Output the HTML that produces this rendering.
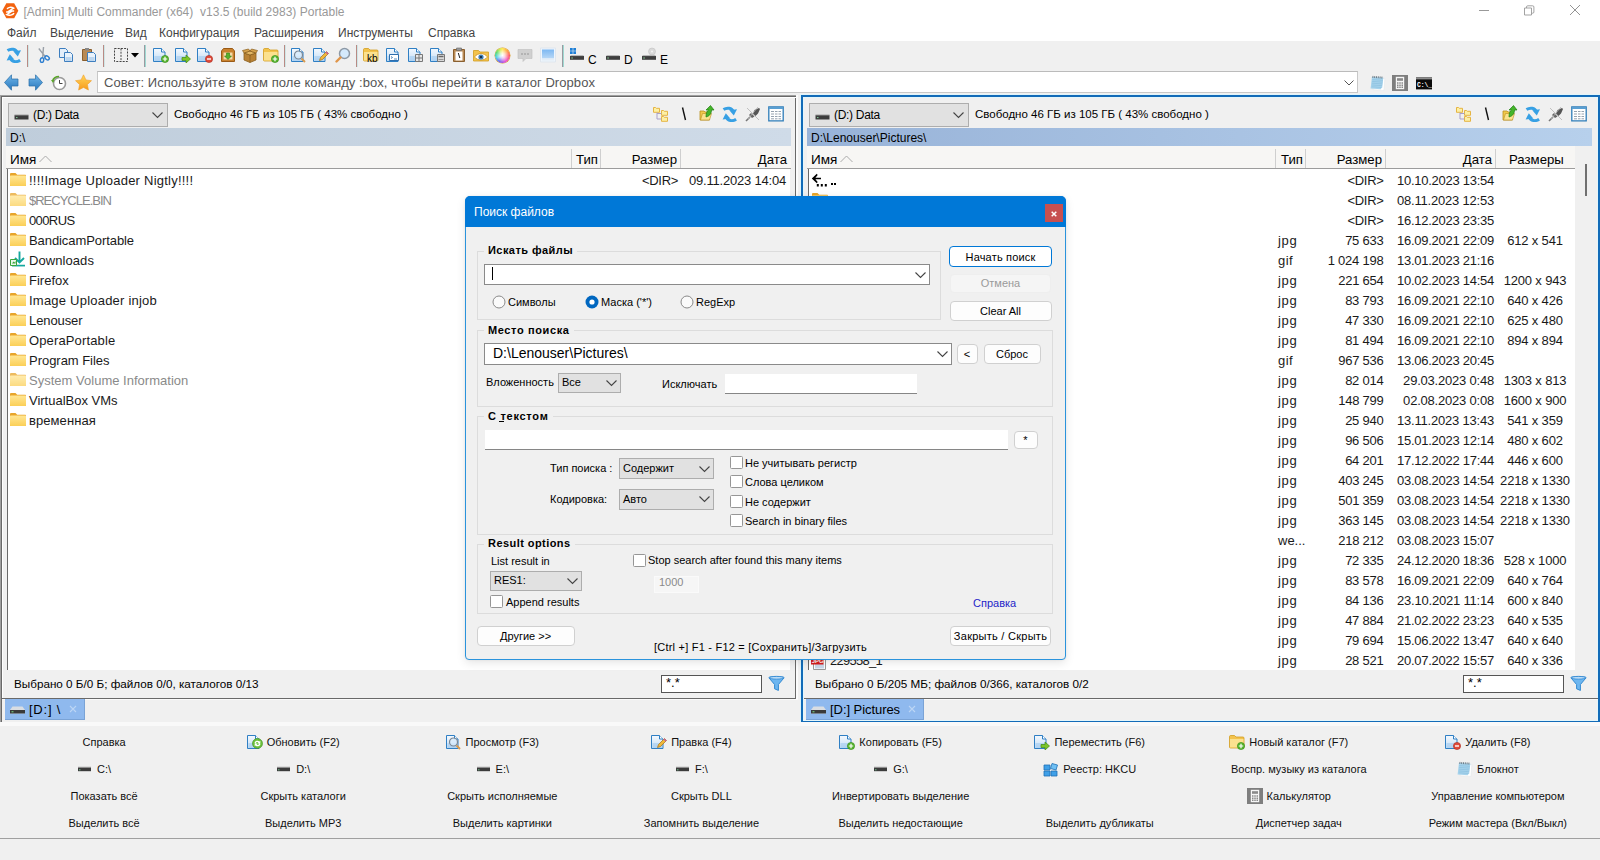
<!DOCTYPE html>
<html lang="ru"><head><meta charset="utf-8"><title>Multi Commander</title>
<style>
html,body{margin:0;padding:0}
body{width:1600px;height:860px;overflow:hidden;background:#f0f0f0;position:relative;font-family:"Liberation Sans",sans-serif;font-size:12px;color:#000}
div,span.t,svg{position:absolute;box-sizing:border-box}
span.t{white-space:pre;display:block}
.seg{font-size:12px}
.lst{font-size:13px}
.dlg{font-size:11px}
.bb{font-size:11px}
.b{font-weight:bold}
.bbc{text-align:center;font-size:11px;line-height:18px;white-space:pre;color:#111}
</style></head>
<body>
<svg width="0" height="0" style="left:0;top:0"><defs><linearGradient id="fg" x1="0" y1="0" x2="0" y2="1"><stop offset="0" stop-color="#ffe694"/><stop offset="1" stop-color="#fbcf57"/></linearGradient><linearGradient id="dg" x1="0" y1="0" x2="0" y2="1"><stop offset="0" stop-color="#f4f9fe"/><stop offset="1" stop-color="#c3ddf5"/></linearGradient><linearGradient id="mg" x1="0" y1="0" x2="0" y2="1"><stop offset="0" stop-color="#7db8f2"/><stop offset="1" stop-color="#b8d8f6"/></linearGradient><linearGradient id="ag" x1="0" y1="0" x2="0" y2="1"><stop offset="0" stop-color="#6fb6ea"/><stop offset="1" stop-color="#2a78bd"/></linearGradient><linearGradient id="sg" x1="0" y1="0" x2="0" y2="1"><stop offset="0" stop-color="#ffd75a"/><stop offset="1" stop-color="#f79a1c"/></linearGradient></defs></svg>
<div style="left:0px;top:0px;width:1600px;height:41px;background:#fff"></div>
<svg style="left:2px;top:3px" width="16.500" height="15.500" viewBox="0 0 16 16" preserveAspectRatio="none"><path d="M4.200 .3h7.600l4 7.700-4 7.700H4.200L.2 8z" fill="#f2620f"/><path d="M5 6.300C5.500 4.300 9 3.800 11.300 5.300L6.800 8.300h5M4 9.300h4.500L4.500 12c2.500 1.200 6 .5 7.200-1.500" fill="none" stroke="#fff" stroke-width="1.400"/></svg>
<span id="f0" class="t seg" style="left:23.5px;top:4.0px;height:16px;line-height:16px;color:#999;letter-spacing:0.015px;">[Admin] Multi Commander (x64)  v13.5 (build 2983) Portable</span>
<svg style="left:1470px;top:0" width="130" height="22" viewBox="0 0 130 22"><path d="M9 10.500h10" stroke="#999" stroke-width="1"/><path d="M54.500 8h7v7h-7zM56.500 8v-1c0-.8.400-1.200 1.200-1.200h5c.8 0 1.200.4 1.200 1.200v5c0 .8-.4 1.200-1.200 1.200h-1" fill="none" stroke="#999" stroke-width=".9"/><path d="M100 5l10 10M110 5l-10 10" stroke="#888" stroke-width=".9"/></svg>
<span class="t seg" style="left:7px;top:25.0px;height:16px;line-height:16px;color:#444;">Файл</span>
<span class="t seg" style="left:50px;top:25.0px;height:16px;line-height:16px;color:#444;">Выделение</span>
<span class="t seg" style="left:125px;top:25.0px;height:16px;line-height:16px;color:#444;">Вид</span>
<span class="t seg" style="left:159px;top:25.0px;height:16px;line-height:16px;color:#444;">Конфигурация</span>
<span class="t seg" style="left:254px;top:25.0px;height:16px;line-height:16px;color:#444;">Расширения</span>
<span class="t seg" style="left:338px;top:25.0px;height:16px;line-height:16px;color:#444;">Инструменты</span>
<span class="t seg" style="left:428px;top:25.0px;height:16px;line-height:16px;color:#444;">Справка</span>
<svg style="left:6px;top:47px" width="16" height="16" viewBox="0 0 16 16"><path d="M1.500 3.600C5 1.200 10 1.800 11.200 5.500" fill="none" stroke="#37a0e4" stroke-width="3"/><path d="M7.300 4.300L15 3.200 11.800 9.600z" fill="#37a0e4"/><g transform="rotate(180 7.800 8.400)"><path d="M1.500 3.600C5 1.200 10 1.800 11.200 5.500" fill="none" stroke="#37a0e4" stroke-width="3"/><path d="M7.300 4.300L15 3.200 11.800 9.600z" fill="#37a0e4"/></g></svg>
<svg style="left:35px;top:47px" width="16" height="16" viewBox="0 0 16 16"><g transform="rotate(-18 8 8)"><path d="M6 .5l3.500 9.500M11 .5L7 10" stroke="#9aa0a8" stroke-width="1.400" fill="none"/><ellipse cx="5.500" cy="12.500" rx="1.700" ry="2.400" transform="rotate(25 5.500 12.500)" fill="none" stroke="#2f7fd0" stroke-width="1.500"/><ellipse cx="11" cy="12" rx="1.700" ry="2.400" transform="rotate(-35 11 12)" fill="none" stroke="#2f7fd0" stroke-width="1.500"/></g></svg>
<svg style="left:58px;top:47px" width="16" height="16" viewBox="0 0 16 16"><path d="M1.500 1.500h6l2 2v7h-8z" fill="#e3eefa" stroke="#3d7ebf"/><path d="M6.500 5.500h6l2 2v7h-8z" fill="#e9f2fb" stroke="#3d7ebf"/><path d="M7.500 10h6v4h-6z" fill="#bcd6ef"/></svg>
<svg style="left:81px;top:47px" width="16" height="16" viewBox="0 0 16 16"><path d="M1.500 2.500h9v11h-9z" fill="#b98a54" stroke="#8a5f2e"/><path d="M4 1h4v2.500h-4z" fill="#888"/><path d="M6.500 5.500h6l2 2v7h-8z" fill="#e9f2fb" stroke="#3d7ebf"/><path d="M7.500 10h6v4h-6z" fill="#bcd6ef"/></svg>
<svg style="left:113px;top:47px" width="16" height="16" viewBox="0 0 16 16"><path d="M1.500 1.500h13v13h-13zM8 1.500v13" fill="none" stroke="#444" stroke-dasharray="2 1.200"/></svg>
<svg style="left:152.5px;top:47px" width="16" height="16" viewBox="0 0 16 16"><path d="M.5 1.500h8l3.500 3.500v9.500h-11.500z" fill="url(#dg)" stroke="#2f7fc4"/><path d="M1.500 9h9.500v5h-9.500z" fill="#9fc8ee" fill-opacity=".55"/><path d="M8.500 1.500v3.500h3.500" fill="#fff" stroke="#2f7fc4"/><circle cx="12" cy="12" r="3.600" fill="#58b530" stroke="#2f8a12" stroke-width=".6"/><path d="M9.800 12h4.400M12 9.800v4.400" stroke="#fff" stroke-width="1.200"/></svg>
<svg style="left:174.5px;top:47px" width="16" height="16" viewBox="0 0 16 16"><path d="M.5 1.500h8l3.500 3.500v9.500h-11.500z" fill="url(#dg)" stroke="#2f7fc4"/><path d="M1.500 9h9.500v5h-9.500z" fill="#9fc8ee" fill-opacity=".55"/><path d="M8.500 1.500v3.500h3.500" fill="#fff" stroke="#2f7fc4"/><path d="M7 10.500h4V8l4.500 4-4.500 4v-2.500H7z" fill="#7cc527" stroke="#3f8a12" stroke-width=".7"/></svg>
<svg style="left:196.5px;top:47px" width="16" height="16" viewBox="0 0 16 16"><path d="M.5 1.500h8l3.500 3.500v9.500h-11.500z" fill="url(#dg)" stroke="#2f7fc4"/><path d="M1.500 9h9.500v5h-9.500z" fill="#9fc8ee" fill-opacity=".55"/><path d="M8.500 1.500v3.500h3.500" fill="#fff" stroke="#2f7fc4"/><circle cx="12" cy="12" r="3.600" fill="#e04a3a" stroke="#a82a1c" stroke-width=".6"/><path d="M10 12h4" stroke="#fff" stroke-width="1.400"/></svg>
<svg style="left:219.5px;top:47px" width="16" height="16" viewBox="0 0 16 16"><path d="M1.500 4l2-2.500h9l2 2.500v10.500h-13z" fill="#c9822e" stroke="#9a5a16"/><path d="M3.500 5.500h9v7h-9z" fill="#f3d9a8"/><path d="M6.500 6h3v3h2L8 12.500 4.500 9h2z" fill="#57b02b" stroke="#2f7f12" stroke-width=".6"/></svg>
<svg style="left:241.5px;top:47px" width="16" height="16" viewBox="0 0 16 16"><path d="M2 6l6 2 6-2v7l-6 2.500-6-2.500z" fill="#b98235" stroke="#8a5f1e" stroke-width=".8"/><path d="M2 6l6-2 6 2-6 2z" fill="#e2b665" stroke="#8a5f1e" stroke-width=".8"/><path d="M2 6L.5 3.500l6-1.500L8 4zM14 6l1.500-2.500-6-1.500L8 4z" fill="#d6a24c" stroke="#8a5f1e" stroke-width=".7"/><path d="M8 8v7.500" stroke="#8a5f1e" stroke-width=".8"/></svg>
<svg style="left:263px;top:47px" width="16" height="16" viewBox="0 0 16 16"><path d="M.5 2.500C.5 2 1 1.500 1.500 1.500h4l1.500 1.500H14c.6 0 1 .4 1 1v9c0 .6-.4 1-1 1H1.500c-.6 0-1-.4-1-1z" fill="#f3c34d" stroke="#d29d21" stroke-width=".8"/><path d="M1 5h13.500v8.500h-13.500z" fill="#fbe18f"/><circle cx="12" cy="12" r="3.600" fill="#58b530" stroke="#2f8a12" stroke-width=".6"/><path d="M9.800 12h4.400M12 9.800v4.400" stroke="#fff" stroke-width="1.200"/></svg>
<svg style="left:291px;top:47px" width="16" height="16" viewBox="0 0 16 16"><path d="M.5 1.500h8l3.500 3.500v9.500h-11.500z" fill="url(#dg)" stroke="#2f7fc4"/><path d="M1.500 9h9.500v5h-9.500z" fill="#9fc8ee" fill-opacity=".55"/><path d="M8.500 1.500v3.500h3.500" fill="#fff" stroke="#2f7fc4"/><circle cx="7.500" cy="8" r="4" fill="#d8ebfb" fill-opacity=".8" stroke="#7b8794" stroke-width="1.200"/><path d="M10.500 11.500l3.500 3.500" stroke="#d99a4e" stroke-width="2"/></svg>
<svg style="left:312.5px;top:47px" width="16" height="16" viewBox="0 0 16 16"><path d="M.5 1.500h8l3.500 3.500v9.500h-11.500z" fill="url(#dg)" stroke="#2f7fc4"/><path d="M1.500 9h9.500v5h-9.500z" fill="#9fc8ee" fill-opacity=".55"/><path d="M8.500 1.500v3.500h3.500" fill="#fff" stroke="#2f7fc4"/><path d="M6.500 13.500l1-3 6-6 2 2-6 6z" fill="#f0b83a" stroke="#a2701a" stroke-width=".7"/><path d="M13 5l2 2" stroke="#c75aa0" stroke-width="1.500"/></svg>
<svg style="left:335px;top:47px" width="16" height="16" viewBox="0 0 16 16"><circle cx="9.500" cy="6.500" r="5" fill="#d4e9fb" stroke="#8d99a6" stroke-width="1.500"/><path d="M5.500 10.500L1.500 14.500" stroke="#e0964a" stroke-width="2.400" stroke-linecap="round"/></svg>
<svg style="left:363px;top:47px" width="16" height="16" viewBox="0 0 16 16"><path d="M.5 2.500C.5 2 1 1.500 1.500 1.500h4l1.500 1.500H14c.6 0 1 .4 1 1v9c0 .6-.4 1-1 1H1.500c-.6 0-1-.4-1-1z" fill="#f3c34d" stroke="#d29d21" stroke-width=".8"/><path d="M1 5h13.500v8.500h-13.500z" fill="#fbe18f"/><text x="4" y="15" font-family="Liberation Sans" font-size="10" fill="#000">kb</text></svg>
<svg style="left:385.5px;top:47px" width="16" height="16" viewBox="0 0 16 16"><path d="M.5 1.500h8l3.500 3.500v9.500h-11.500z" fill="url(#dg)" stroke="#2f7fc4"/><path d="M1.500 9h9.500v5h-9.500z" fill="#9fc8ee" fill-opacity=".55"/><path d="M8.500 1.500v3.500h3.500" fill="#fff" stroke="#2f7fc4"/><path d="M3.500 7.500h9v6h-9z" fill="#fff" stroke="#2f6fae"/><path d="M5 9.500l1.500 1-1.500 1M8 12h3" stroke="#2f6fae" stroke-width=".8" fill="none"/></svg>
<svg style="left:407.5px;top:47px" width="16" height="16" viewBox="0 0 16 16"><path d="M.5 1.500h8l3.500 3.500v9.500h-11.500z" fill="url(#dg)" stroke="#2f7fc4"/><path d="M1.500 9h9.500v5h-9.500z" fill="#9fc8ee" fill-opacity=".55"/><path d="M8.500 1.500v3.500h3.500" fill="#fff" stroke="#2f7fc4"/><path d="M7.500 7.500h7v7h-7z" fill="#e8e8e8" stroke="#777"/><path d="M11 7.500v7M7.500 11h7" stroke="#777"/></svg>
<svg style="left:429.5px;top:47px" width="16" height="16" viewBox="0 0 16 16"><path d="M.5 1.500h8l3.500 3.500v9.500h-11.500z" fill="url(#dg)" stroke="#2f7fc4"/><path d="M1.500 9h9.500v5h-9.500z" fill="#9fc8ee" fill-opacity=".55"/><path d="M8.500 1.500v3.500h3.500" fill="#fff" stroke="#2f7fc4"/><path d="M7.500 7.500h7v7h-7z" fill="#d8d8d8" stroke="#777"/><path d="M8.500 9.500h5" stroke="#666" stroke-width="1.400"/><path d="M8.500 12.500h5" stroke="#999"/></svg>
<svg style="left:450.5px;top:47px" width="16" height="16" viewBox="0 0 16 16"><path d="M2.500 2.500h11v12h-11z" fill="#b98a54" stroke="#8a5f2e"/><path d="M4.500 4.500h7v9h-7z" fill="#fff"/><path d="M5.500 1h5v2.500h-5z" fill="#999" stroke="#666" stroke-width=".6"/><path d="M7.300 6l1.500 5" stroke="#222"/></svg>
<svg style="left:473px;top:47px" width="16" height="16" viewBox="0 0 16 16"><path d="M.5 3.500h5l1.500 1.500h8.500v9H.5z" fill="#f3c34d" stroke="#d29d21" stroke-width=".8"/><path d="M1.500 10c3-4.500 10-4.500 13 0-3 4-10 4-13 0z" fill="#fff" stroke="#c9962a" stroke-width=".8"/><circle cx="8" cy="10" r="2.600" fill="#3f7fb6"/><circle cx="8" cy="10" r="1.100" fill="#123"/></svg>
<div style="left:494.7px;top:47.5px;width:15.5px;height:15.5px;border-radius:50%;background:radial-gradient(circle,#fff 0,rgba(255,255,255,.75) 25%,rgba(255,255,255,0) 70%),conic-gradient(from 0deg,#ffe640,#ff9a2a 12%,#ff4a55 25%,#e83ad0 42%,#5a55f0 58%,#35c8e8 70%,#45d85a 83%,#c8e83a 93%,#ffe640);box-shadow:0 0 0 .5px #d9a030"></div>
<svg style="left:517px;top:47px" width="16" height="16" viewBox="0 0 16 16"><path d="M1 2.500h14v9H9L6 14.500v-3H1z" fill="#d0d0d0" stroke="#bdbdbd" stroke-width=".6"/><circle cx="5" cy="7" r="1" fill="#aaa"/><circle cx="8" cy="7" r="1" fill="#aaa"/><circle cx="11" cy="7" r="1" fill="#aaa"/></svg>
<svg style="left:539.7px;top:47px" width="16" height="16" viewBox="0 0 16 16"><path d="M.5 1h15v14H.5z" fill="#eef5fc" stroke="#dfe6ee"/><path d="M2 2.500h12v9H2z" fill="url(#mg)"/><path d="M2 11.500h12v2H2z" fill="#e3edf7"/></svg>
<svg style="left:569px;top:47px" width="16" height="16" viewBox="0 0 16 16"><path d="M1 9h14v3.800H1z" fill="#3e3e3e"/><path d="M1.500 8.700h13" stroke="#8c8c8c" stroke-width=".7"/><path d="M2.200 11h1.800" stroke="#8fe0a0" stroke-width=".8"/><path d="M1 1h2.700v2.700H1zM4.300 1H7v2.700H4.300zM1 4.300h2.700V7H1zM4.300 4.300H7V7H4.300z" fill="#1e7fd6"/></svg>
<svg style="left:605px;top:47px" width="16" height="16" viewBox="0 0 16 16"><path d="M1 9h14v3.800H1z" fill="#3e3e3e"/><path d="M1.500 8.700h13" stroke="#8c8c8c" stroke-width=".7"/><path d="M2.200 11h1.800" stroke="#8fe0a0" stroke-width=".8"/></svg>
<svg style="left:641px;top:47px" width="16" height="16" viewBox="0 0 16 16"><path d="M1 9h14v3.800H1z" fill="#3e3e3e"/><path d="M1.500 8.700h13" stroke="#8c8c8c" stroke-width=".7"/><path d="M2.200 11h1.800" stroke="#8fe0a0" stroke-width=".8"/><circle cx="11" cy="4.500" r="3.500" fill="#d9d9d9" stroke="#bbb" stroke-width=".5"/><circle cx="11" cy="4.500" r="1" fill="#f4f4f4"/></svg>
<svg style="left:131px;top:53px" width="8" height="5" viewBox="0 0 8 5"><path d="M0 0h8L4 4.500z" fill="#000"/></svg>
<div style="left:27px;top:45px;width:1px;height:22px;background:#b88a84"></div>
<div style="left:28px;top:45px;width:1px;height:22px;background:#cfe6e6"></div>
<div style="left:103px;top:45px;width:1px;height:22px;background:#b88a84"></div>
<div style="left:104px;top:45px;width:1px;height:22px;background:#cfe6e6"></div>
<div style="left:284px;top:45px;width:1px;height:22px;background:#b88a84"></div>
<div style="left:285px;top:45px;width:1px;height:22px;background:#cfe6e6"></div>
<div style="left:356px;top:45px;width:1px;height:22px;background:#b88a84"></div>
<div style="left:357px;top:45px;width:1px;height:22px;background:#cfe6e6"></div>
<div style="left:143.5px;top:45px;width:1px;height:22px;background:#9a9aa0"></div>
<div style="left:144.5px;top:45px;width:1px;height:22px;background:#9fd9d2"></div>
<div style="left:561.5px;top:45px;width:1px;height:22px;background:#9a9aa0"></div>
<div style="left:562.5px;top:45px;width:1px;height:22px;background:#9fd9d2"></div>
<span class="t seg" style="left:588px;top:51.5px;height:16px;line-height:16px;">C</span>
<span class="t seg" style="left:624px;top:51.5px;height:16px;line-height:16px;">D</span>
<span class="t seg" style="left:660px;top:51.5px;height:16px;line-height:16px;">E</span>
<svg style="left:4px;top:73.8px" width="16" height="17" viewBox="0 0 16 17"><path d="M.5 8.500L7.500 .8V5H14v7H7.500v4.200z" fill="url(#ag)" stroke="#2a6ea8" stroke-width=".7"/></svg>
<svg style="left:27.5px;top:73.8px" width="16" height="17" viewBox="0 0 16 17"><path d="M14.500 8.500L7.500 .8V5H1v7h6.500v4.200z" fill="url(#ag)" stroke="#2a6ea8" stroke-width=".7"/></svg>
<svg style="left:51px;top:75px" width="16" height="16" viewBox="0 0 16 16"><circle cx="8.500" cy="8.500" r="6" fill="#fff" stroke="#9a9a9a" stroke-width="1.600"/><path d="M8.500 5v3.500h3" stroke="#444" stroke-width="1" fill="none"/><path d="M1.500 6C2.500 3 5 1.500 8 1.500" stroke="#5aa52a" stroke-width="1.600" fill="none"/><path d="M0 5l3.500.3L2 8z" fill="#5aa52a"/></svg>
<svg style="left:74.5px;top:74px" width="17" height="17" viewBox="0 0 16 16"><path d="M8 .8l2.300 4.800 5.200.7-3.800 3.600.9 5.200L8 12.600 3.400 15.100l.9-5.200L.5 6.300l5.200-.7z" fill="url(#sg)" stroke="#f2a02a" stroke-width=".6"/></svg>
<div style="left:96.5px;top:71.3px;width:1261.5px;height:21.5px;background:#fff;border:1px solid #c8c8c8;border-top-color:#bbb"></div>
<span id="f1" class="t lst" style="left:104px;top:75.3px;height:16px;line-height:16px;color:#555;letter-spacing:0.059px;">Совет: Используйте в этом поле команду :box, чтобы перейти в каталог Dropbox</span>
<svg style="left:1343.500px;top:80px" width="10" height="6" viewBox="0 0 10 6"><path d="M.5.500L5 5 9.500.5" fill="none" stroke="#555" stroke-width="1"/></svg>
<svg style="left:1369.5px;top:74.5px" width="16" height="16" viewBox="0 0 16 16"><g transform="rotate(4 8 8)"><path d="M3.500 3h11v12h-11z" fill="#fff" stroke="#e3e6ea" stroke-width=".6"/><path d="M1.500 2.500h11.500l-.5 9.500-1.500 2H1z" fill="#a6d3ec"/><path d="M2 5h10.500M2 6.800h10.500M2 8.600h10.500M2 10.400h10.300M2 12.200h9.500" stroke="#86bcdd" stroke-width=".6"/><path d="M2.500 1.300v2M4.300 1.300v2M6.100 1.300v2M7.900 1.300v2M9.700 1.300v2M11.500 1.300v2" stroke="#5a6874" stroke-width=".8"/></g></svg>
<svg style="left:1392px;top:75px" width="16" height="16" viewBox="0 0 16 16"><path d="M0 0h16v16H0z" fill="#7e7e7e"/><path d="M3.800 1.800h8.400v12.400H3.800z" fill="#f6f6f6"/><path d="M5 3.200h6v2.600H5z" fill="#8a8a8a"/><path d="M5 7.200h1.500v1.500H5zM7.250 7.200h1.500v1.500h-1.500zM9.500 7.200H11v1.500H9.500zM5 9.400h1.500v1.500H5zM7.250 9.400h1.500v1.500h-1.500zM9.500 9.400H11v1.500H9.500zM5 11.600h1.500v1.500H5zM7.250 11.600h1.500v1.500h-1.500zM9.500 11.600H11v1.500H9.500z" fill="#8a8a8a"/></svg>
<svg style="left:1415.5px;top:75px" width="16" height="16" viewBox="0 0 16 16"><path d="M0 2.400h16v12H0z" fill="#0a0a0a"/><path d="M0 2.400h16v2H0z" fill="#8c8c8c"/><text x="1" y="12.200" font-family="Liberation Mono" font-size="6.300" font-weight="bold" fill="#fff">C:\_</text></svg>
<div style="left:0px;top:95px;width:797px;height:1px;background:#a0a0a0"></div>
<div style="left:0px;top:95px;width:1px;height:627px;background:#a0a0a0"></div>
<div style="left:1px;top:96px;width:795px;height:1px;background:#696969"></div>
<div style="left:1px;top:96px;width:1px;height:626px;background:#696969"></div>
<div style="left:795px;top:96px;width:1px;height:603px;background:#696969"></div>
<div style="left:796px;top:95px;width:2px;height:605px;background:#fbfbfb"></div>
<div style="left:2px;top:97px;width:794px;height:1px;background:#fff"></div>
<div style="left:2px;top:97px;width:1px;height:601px;background:#fff"></div>
<div style="left:8px;top:103px;width:160px;height:24px;background:#e1e1e1;border:1px solid #adadad"></div>
<svg style="left:14px;top:113px" width="15" height="7" viewBox="0 0 15 7"><path d="M.5 2.200h14v4.300H.5z" fill="#3c3c3c"/><path d="M.5 1.900h14" stroke="#8a8a8a" stroke-width=".6"/><path d="M2 4.600h1.500" stroke="#8fe0a8" stroke-width=".9"/></svg>
<span id="f2" class="t seg" style="left:33px;top:107.0px;height:16px;line-height:16px;letter-spacing:-0.299px;">(D:) Data</span>
<svg style="left:152px;top:112px" width="11" height="7" viewBox="0 0 11 7"><path d="M.5.500L5.500 5.500 10.500.5" fill="none" stroke="#444" stroke-width="1.100"/></svg>
<span class="t seg" style="left:174px;top:106.0px;height:16px;line-height:16px;font-size:11.500px;">Свободно 46 ГБ из 105 ГБ ( 43% свободно )</span>
<svg style="left:653px;top:106px" width="16" height="16" viewBox="0 0 16 16"><path d="M.5 1.500h2l.8.800h3.200v4h-6z" fill="#fdf0a4" stroke="#e5b443" stroke-width="1"/><path d="M8.500 4.500h2l.8.800h3.200v4h-6zM8.500 10.500h2l.8.800h3.200v4h-6z" fill="#fdf0a4" stroke="#e5b443" stroke-width="1"/><path d="M4 6.500v6.500h4.500M4 7.500h4.500" fill="none" stroke="#a9a1c9" stroke-width="1"/></svg>
<svg style="left:680px;top:106px" width="8" height="16" viewBox="0 0 8 16"><path d="M2.500 1.500L5.500 14" stroke="#111" stroke-width="1.400"/></svg>
<svg style="left:699px;top:105px" width="16" height="16" viewBox="0 0 16 16"><path d="M1 6h4l1 1h4.500v8H1z" fill="#f1c84c" stroke="#b98f1e" stroke-width=".8"/><path d="M1.500 15l2-6.500h9L10.500 15z" fill="#fbe38f" stroke="#b98f1e" stroke-width=".6"/><path d="M7 12c0-4 1-6 2.500-7H7l4.500-4.500L15 5h-2.500c0 3-1.500 6-5.500 7z" fill="#45b52a" stroke="#1f7f12" stroke-width=".7"/></svg>
<svg style="left:722px;top:105.5px" width="16" height="16" viewBox="0 0 16 16"><path d="M1.500 3.600C5 1.200 10 1.800 11.200 5.500" fill="none" stroke="#37a0e4" stroke-width="3"/><path d="M7.300 4.300L15 3.200 11.800 9.600z" fill="#37a0e4"/><g transform="rotate(180 7.800 8.400)"><path d="M1.500 3.600C5 1.200 10 1.800 11.200 5.500" fill="none" stroke="#37a0e4" stroke-width="3"/><path d="M7.300 4.300L15 3.200 11.800 9.600z" fill="#37a0e4"/></g></svg>
<svg style="left:745px;top:106px" width="16" height="16" viewBox="0 0 16 16"><path d="M1 15L5 11" stroke="#777" stroke-width="1.600"/><path d="M4 9l3 3 2.500-1.500L6 7z" fill="#666"/><path d="M8 7.500l2.500 2.500L13 7.500 15 3l-1-1-4.500 2z" fill="#555"/><path d="M2 2l12 12M13 1L3 13" stroke="#b4b4b4" stroke-width=".8"/></svg>
<svg style="left:768px;top:105.5px" width="16" height="16" viewBox="0 0 16 16"><path d="M.8 .8h14.400v14H.8z" fill="#fff" stroke="#2e7cb8" stroke-width="1.300"/><path d="M1 1h14v2H1z" fill="#5a9fd2"/><path d="M3 5.500h3M3 8h3M3 10.500h3M3 12.800h3M7 5.500h2.500M7 8h2.500M7 10.500h2.500M7 12.800h2.500M10.500 5.500H13M10.500 8H13M10.500 10.500H13M10.500 12.800H13" stroke="#8a97a6" stroke-width=".9"/></svg>
<div style="left:6px;top:128px;width:785px;height:18.4px;background:linear-gradient(90deg,#bfcddb,#cfdbe8)"></div>
<span class="t seg" style="left:10px;top:130.0px;height:16px;line-height:16px;">D:\</span>
<div style="left:6px;top:146px;width:785px;height:23px;background:#f7f6f4;border-bottom:1px solid #9c9c9c"></div>
<span class="t lst" style="left:10px;top:152.0px;height:16px;line-height:16px;font-size:13.500px;">Имя</span>
<svg style="left:39px;top:155px" width="13" height="8" viewBox="0 0 13 8"><path d="M.5 7L6.500 1 12.500 7" fill="none" stroke="#aaa" stroke-width="1"/></svg>
<div style="left:571px;top:149px;width:1px;height:19px;background:#cfcfcf"></div>
<div style="left:600px;top:149px;width:1px;height:19px;background:#cfcfcf"></div>
<div style="left:680px;top:149px;width:1px;height:19px;background:#cfcfcf"></div>
<span class="t lst" style="left:576px;top:152.0px;height:16px;line-height:16px;font-size:13.200px;">Тип</span>
<span class="t lst" style="right:923px;top:152.0px;height:16px;line-height:16px;font-size:13.200px;">Размер</span>
<span class="t lst" style="right:813px;top:152.0px;height:16px;line-height:16px;font-size:13.200px;">Дата</span>
<div style="left:7px;top:169px;width:783px;height:501px;background:#fff;border-left:1px solid #696969"></div>
<svg style="left:10px;top:172px" width="16" height="16" viewBox="0 0 16 16"><path d="M0 2.200C0 1.500.5 1 1.200 1h4.300l1.700 1.700H15c.6 0 1 .4 1 1V13c0 .6-.4 1-1 1H1c-.6 0-1-.4-1-1z" fill="#e8a52a"/><path d="M0 4.600c0-.6.400-1 1-1H15c.6 0 1 .4 1 1V13c0 .6-.4 1-1 1H1c-.6 0-1-.4-1-1z" fill="url(#fg)"/></svg>
<span id="f3" class="t lst" style="left:29px;top:173.0px;height:16px;line-height:16px;color:#1a1a1a;letter-spacing:0.234px;">!!!!Image Uploader Nigtly!!!!</span>
<span id="f4" class="t lst" style="right:922px;top:173.0px;height:16px;line-height:16px;color:#1a1a1a;letter-spacing:-0.316px;">&lt;DIR&gt;</span>
<svg style="left:10px;top:192px" width="16" height="16" viewBox="0 0 16 16" opacity=".75"><path d="M0 2.200C0 1.500.5 1 1.200 1h4.300l1.700 1.700H15c.6 0 1 .4 1 1V13c0 .6-.4 1-1 1H1c-.6 0-1-.4-1-1z" fill="#e8a52a"/><path d="M0 4.600c0-.6.400-1 1-1H15c.6 0 1 .4 1 1V13c0 .6-.4 1-1 1H1c-.6 0-1-.4-1-1z" fill="url(#fg)"/></svg>
<span id="f5" class="t lst" style="left:29px;top:193.0px;height:16px;line-height:16px;color:#8a8a8a;letter-spacing:-1.000px;">$RECYCLE.BIN</span>
<span id="f6" class="t lst" style="right:922px;top:193.0px;height:16px;line-height:16px;color:#1a1a1a;letter-spacing:-0.316px;">&lt;DIR&gt;</span>
<svg style="left:10px;top:212px" width="16" height="16" viewBox="0 0 16 16"><path d="M0 2.200C0 1.500.5 1 1.200 1h4.300l1.700 1.700H15c.6 0 1 .4 1 1V13c0 .6-.4 1-1 1H1c-.6 0-1-.4-1-1z" fill="#e8a52a"/><path d="M0 4.600c0-.6.400-1 1-1H15c.6 0 1 .4 1 1V13c0 .6-.4 1-1 1H1c-.6 0-1-.4-1-1z" fill="url(#fg)"/></svg>
<span id="f7" class="t lst" style="left:29px;top:213.0px;height:16px;line-height:16px;color:#1a1a1a;letter-spacing:-0.607px;">000RUS</span>
<span id="f8" class="t lst" style="right:922px;top:213.0px;height:16px;line-height:16px;color:#1a1a1a;letter-spacing:-0.316px;">&lt;DIR&gt;</span>
<svg style="left:10px;top:232px" width="16" height="16" viewBox="0 0 16 16"><path d="M0 2.200C0 1.500.5 1 1.200 1h4.300l1.700 1.700H15c.6 0 1 .4 1 1V13c0 .6-.4 1-1 1H1c-.6 0-1-.4-1-1z" fill="#e8a52a"/><path d="M0 4.600c0-.6.400-1 1-1H15c.6 0 1 .4 1 1V13c0 .6-.4 1-1 1H1c-.6 0-1-.4-1-1z" fill="url(#fg)"/></svg>
<span id="f9" class="t lst" style="left:29px;top:233.0px;height:16px;line-height:16px;color:#1a1a1a;letter-spacing:-0.077px;">BandicamPortable</span>
<span id="f10" class="t lst" style="right:922px;top:233.0px;height:16px;line-height:16px;color:#1a1a1a;letter-spacing:-0.316px;">&lt;DIR&gt;</span>
<svg style="left:10px;top:251px" width="16" height="16" viewBox="0 0 16 16"><path d="M9.500 .5v11M5 7l4.500 4.500L14 7" fill="none" stroke="#14a79e" stroke-width="1.900"/><path d="M2 14.600h13" stroke="#14a79e" stroke-width="1.700"/><path d="M.5 8.500h6v6h-6z" fill="#eaf7ea" stroke="#3aa53a"/><path d="M2 12.500l1.500-2 1 1 1-1.500v2.500z" fill="#3aa53a"/></svg>
<span id="f11" class="t lst" style="left:29px;top:253.0px;height:16px;line-height:16px;color:#1a1a1a;letter-spacing:0.075px;">Downloads</span>
<span id="f12" class="t lst" style="right:922px;top:253.0px;height:16px;line-height:16px;color:#1a1a1a;letter-spacing:-0.316px;">&lt;DIR&gt;</span>
<svg style="left:10px;top:272px" width="16" height="16" viewBox="0 0 16 16"><path d="M0 2.200C0 1.500.5 1 1.200 1h4.300l1.700 1.700H15c.6 0 1 .4 1 1V13c0 .6-.4 1-1 1H1c-.6 0-1-.4-1-1z" fill="#e8a52a"/><path d="M0 4.600c0-.6.400-1 1-1H15c.6 0 1 .4 1 1V13c0 .6-.4 1-1 1H1c-.6 0-1-.4-1-1z" fill="url(#fg)"/></svg>
<span id="f13" class="t lst" style="left:29px;top:273.0px;height:16px;line-height:16px;color:#1a1a1a;letter-spacing:0.009px;">Firefox</span>
<span id="f14" class="t lst" style="right:922px;top:273.0px;height:16px;line-height:16px;color:#1a1a1a;letter-spacing:-0.316px;">&lt;DIR&gt;</span>
<svg style="left:10px;top:292px" width="16" height="16" viewBox="0 0 16 16"><path d="M0 2.200C0 1.500.5 1 1.200 1h4.300l1.700 1.700H15c.6 0 1 .4 1 1V13c0 .6-.4 1-1 1H1c-.6 0-1-.4-1-1z" fill="#e8a52a"/><path d="M0 4.600c0-.6.400-1 1-1H15c.6 0 1 .4 1 1V13c0 .6-.4 1-1 1H1c-.6 0-1-.4-1-1z" fill="url(#fg)"/></svg>
<span id="f15" class="t lst" style="left:29px;top:293.0px;height:16px;line-height:16px;color:#1a1a1a;letter-spacing:0.221px;">Image Uploader injob</span>
<span id="f16" class="t lst" style="right:922px;top:293.0px;height:16px;line-height:16px;color:#1a1a1a;letter-spacing:-0.316px;">&lt;DIR&gt;</span>
<svg style="left:10px;top:312px" width="16" height="16" viewBox="0 0 16 16"><path d="M0 2.200C0 1.500.5 1 1.200 1h4.300l1.700 1.700H15c.6 0 1 .4 1 1V13c0 .6-.4 1-1 1H1c-.6 0-1-.4-1-1z" fill="#e8a52a"/><path d="M0 4.600c0-.6.400-1 1-1H15c.6 0 1 .4 1 1V13c0 .6-.4 1-1 1H1c-.6 0-1-.4-1-1z" fill="url(#fg)"/></svg>
<span id="f17" class="t lst" style="left:29px;top:313.0px;height:16px;line-height:16px;color:#1a1a1a;letter-spacing:-0.090px;">Lenouser</span>
<span id="f18" class="t lst" style="right:922px;top:313.0px;height:16px;line-height:16px;color:#1a1a1a;letter-spacing:-0.316px;">&lt;DIR&gt;</span>
<svg style="left:10px;top:332px" width="16" height="16" viewBox="0 0 16 16"><path d="M0 2.200C0 1.500.5 1 1.200 1h4.300l1.700 1.700H15c.6 0 1 .4 1 1V13c0 .6-.4 1-1 1H1c-.6 0-1-.4-1-1z" fill="#e8a52a"/><path d="M0 4.600c0-.6.400-1 1-1H15c.6 0 1 .4 1 1V13c0 .6-.4 1-1 1H1c-.6 0-1-.4-1-1z" fill="url(#fg)"/></svg>
<span id="f19" class="t lst" style="left:29px;top:333.0px;height:16px;line-height:16px;color:#1a1a1a;letter-spacing:0.134px;">OperaPortable</span>
<span id="f20" class="t lst" style="right:922px;top:333.0px;height:16px;line-height:16px;color:#1a1a1a;letter-spacing:-0.316px;">&lt;DIR&gt;</span>
<svg style="left:10px;top:352px" width="16" height="16" viewBox="0 0 16 16"><path d="M0 2.200C0 1.500.5 1 1.200 1h4.300l1.700 1.700H15c.6 0 1 .4 1 1V13c0 .6-.4 1-1 1H1c-.6 0-1-.4-1-1z" fill="#e8a52a"/><path d="M0 4.600c0-.6.400-1 1-1H15c.6 0 1 .4 1 1V13c0 .6-.4 1-1 1H1c-.6 0-1-.4-1-1z" fill="url(#fg)"/></svg>
<span id="f21" class="t lst" style="left:29px;top:353.0px;height:16px;line-height:16px;color:#1a1a1a;letter-spacing:-0.032px;">Program Files</span>
<span id="f22" class="t lst" style="right:922px;top:353.0px;height:16px;line-height:16px;color:#1a1a1a;letter-spacing:-0.316px;">&lt;DIR&gt;</span>
<svg style="left:10px;top:372px" width="16" height="16" viewBox="0 0 16 16" opacity=".75"><path d="M0 2.200C0 1.500.5 1 1.200 1h4.300l1.700 1.700H15c.6 0 1 .4 1 1V13c0 .6-.4 1-1 1H1c-.6 0-1-.4-1-1z" fill="#e8a52a"/><path d="M0 4.600c0-.6.400-1 1-1H15c.6 0 1 .4 1 1V13c0 .6-.4 1-1 1H1c-.6 0-1-.4-1-1z" fill="url(#fg)"/></svg>
<span id="f23" class="t lst" style="left:29px;top:373.0px;height:16px;line-height:16px;color:#8a8a8a;letter-spacing:0.013px;">System Volume Information</span>
<span id="f24" class="t lst" style="right:922px;top:373.0px;height:16px;line-height:16px;color:#1a1a1a;letter-spacing:-0.316px;">&lt;DIR&gt;</span>
<svg style="left:10px;top:392px" width="16" height="16" viewBox="0 0 16 16"><path d="M0 2.200C0 1.500.5 1 1.200 1h4.300l1.700 1.700H15c.6 0 1 .4 1 1V13c0 .6-.4 1-1 1H1c-.6 0-1-.4-1-1z" fill="#e8a52a"/><path d="M0 4.600c0-.6.400-1 1-1H15c.6 0 1 .4 1 1V13c0 .6-.4 1-1 1H1c-.6 0-1-.4-1-1z" fill="url(#fg)"/></svg>
<span id="f25" class="t lst" style="left:29px;top:393.0px;height:16px;line-height:16px;color:#1a1a1a;letter-spacing:-0.010px;">VirtualBox VMs</span>
<span id="f26" class="t lst" style="right:922px;top:393.0px;height:16px;line-height:16px;color:#1a1a1a;letter-spacing:-0.316px;">&lt;DIR&gt;</span>
<svg style="left:10px;top:412px" width="16" height="16" viewBox="0 0 16 16"><path d="M0 2.200C0 1.500.5 1 1.200 1h4.300l1.700 1.700H15c.6 0 1 .4 1 1V13c0 .6-.4 1-1 1H1c-.6 0-1-.4-1-1z" fill="#e8a52a"/><path d="M0 4.600c0-.6.400-1 1-1H15c.6 0 1 .4 1 1V13c0 .6-.4 1-1 1H1c-.6 0-1-.4-1-1z" fill="url(#fg)"/></svg>
<span id="f27" class="t lst" style="left:29px;top:413.0px;height:16px;line-height:16px;color:#1a1a1a;letter-spacing:0.070px;">временная</span>
<span id="f28" class="t lst" style="right:922px;top:413.0px;height:16px;line-height:16px;color:#1a1a1a;letter-spacing:-0.316px;">&lt;DIR&gt;</span>
<span id="f29" class="t lst" style="right:814px;top:173.0px;height:16px;line-height:16px;color:#1a1a1a;letter-spacing:-0.203px;">09.11.2023 14:04</span>
<div style="left:800px;top:94px;width:801px;height:630px;border:1px solid #e0f5fb;background:#f0f0f0"></div>
<div style="left:801px;top:95px;width:799px;height:628px;border:2px solid #126bb8"></div>
<div style="left:803px;top:97px;width:795px;height:624px;border:1px solid #e4f6fb"></div>
<div style="left:809px;top:103px;width:160px;height:24px;background:#e1e1e1;border:1px solid #adadad"></div>
<svg style="left:815px;top:113px" width="15" height="7" viewBox="0 0 15 7"><path d="M.5 2.200h14v4.300H.5z" fill="#3c3c3c"/><path d="M.5 1.900h14" stroke="#8a8a8a" stroke-width=".6"/><path d="M2 4.600h1.500" stroke="#8fe0a8" stroke-width=".9"/></svg>
<span id="f30" class="t seg" style="left:834px;top:107.0px;height:16px;line-height:16px;letter-spacing:-0.299px;">(D:) Data</span>
<svg style="left:953px;top:112px" width="11" height="7" viewBox="0 0 11 7"><path d="M.5.500L5.500 5.500 10.500.5" fill="none" stroke="#444" stroke-width="1.100"/></svg>
<span class="t seg" style="left:975px;top:106.0px;height:16px;line-height:16px;font-size:11.500px;">Свободно 46 ГБ из 105 ГБ ( 43% свободно )</span>
<svg style="left:1455.5px;top:106px" width="16" height="16" viewBox="0 0 16 16"><path d="M.5 1.500h2l.8.800h3.200v4h-6z" fill="#fdf0a4" stroke="#e5b443" stroke-width="1"/><path d="M8.500 4.500h2l.8.800h3.200v4h-6zM8.500 10.500h2l.8.800h3.200v4h-6z" fill="#fdf0a4" stroke="#e5b443" stroke-width="1"/><path d="M4 6.500v6.500h4.500M4 7.500h4.500" fill="none" stroke="#a9a1c9" stroke-width="1"/></svg>
<svg style="left:1482.5px;top:106px" width="8" height="16" viewBox="0 0 8 16"><path d="M2.500 1.500L5.500 14" stroke="#111" stroke-width="1.400"/></svg>
<svg style="left:1501.5px;top:105px" width="16" height="16" viewBox="0 0 16 16"><path d="M1 6h4l1 1h4.500v8H1z" fill="#f1c84c" stroke="#b98f1e" stroke-width=".8"/><path d="M1.500 15l2-6.500h9L10.500 15z" fill="#fbe38f" stroke="#b98f1e" stroke-width=".6"/><path d="M7 12c0-4 1-6 2.500-7H7l4.500-4.500L15 5h-2.500c0 3-1.500 6-5.500 7z" fill="#45b52a" stroke="#1f7f12" stroke-width=".7"/></svg>
<svg style="left:1524.5px;top:105.5px" width="16" height="16" viewBox="0 0 16 16"><path d="M1.500 3.600C5 1.200 10 1.800 11.200 5.500" fill="none" stroke="#37a0e4" stroke-width="3"/><path d="M7.300 4.300L15 3.200 11.800 9.600z" fill="#37a0e4"/><g transform="rotate(180 7.800 8.400)"><path d="M1.500 3.600C5 1.200 10 1.800 11.200 5.500" fill="none" stroke="#37a0e4" stroke-width="3"/><path d="M7.300 4.300L15 3.200 11.800 9.600z" fill="#37a0e4"/></g></svg>
<svg style="left:1547.5px;top:106px" width="16" height="16" viewBox="0 0 16 16"><path d="M1 15L5 11" stroke="#777" stroke-width="1.600"/><path d="M4 9l3 3 2.500-1.500L6 7z" fill="#666"/><path d="M8 7.500l2.500 2.500L13 7.500 15 3l-1-1-4.500 2z" fill="#555"/><path d="M2 2l12 12M13 1L3 13" stroke="#b4b4b4" stroke-width=".8"/></svg>
<svg style="left:1570.5px;top:105.5px" width="16" height="16" viewBox="0 0 16 16"><path d="M.8 .8h14.400v14H.8z" fill="#fff" stroke="#2e7cb8" stroke-width="1.300"/><path d="M1 1h14v2H1z" fill="#5a9fd2"/><path d="M3 5.500h3M3 8h3M3 10.500h3M3 12.800h3M7 5.500h2.500M7 8h2.500M7 10.500h2.500M7 12.800h2.500M10.500 5.500H13M10.500 8H13M10.500 10.500H13M10.500 12.800H13" stroke="#8a97a6" stroke-width=".9"/></svg>
<div style="left:807px;top:128px;width:785px;height:18.4px;background:linear-gradient(90deg,#98b3d8,#b7d0ec)"></div>
<span class="t seg" style="left:811px;top:130.0px;height:16px;line-height:16px;">D:\Lenouser\Pictures\</span>
<div style="left:807px;top:146px;width:769px;height:23px;background:#f7f6f4;border-bottom:1px solid #9c9c9c"></div>
<span class="t lst" style="left:811px;top:152.0px;height:16px;line-height:16px;font-size:13.500px;">Имя</span>
<svg style="left:840px;top:155px" width="13" height="8" viewBox="0 0 13 8"><path d="M.5 7L6.500 1 12.500 7" fill="none" stroke="#aaa" stroke-width="1"/></svg>
<div style="left:1275px;top:149px;width:1px;height:19px;background:#cfcfcf"></div>
<div style="left:1305px;top:149px;width:1px;height:19px;background:#cfcfcf"></div>
<div style="left:1385px;top:149px;width:1px;height:19px;background:#cfcfcf"></div>
<div style="left:1495px;top:149px;width:1px;height:19px;background:#cfcfcf"></div>
<span class="t lst" style="left:1281px;top:152.0px;height:16px;line-height:16px;font-size:13.200px;">Тип</span>
<span class="t lst" style="right:218px;top:152.0px;height:16px;line-height:16px;font-size:13.200px;">Размер</span>
<span class="t lst" style="right:108px;top:152.0px;height:16px;line-height:16px;font-size:13.200px;">Дата</span>
<span class="t lst" style="left:1509px;top:152.0px;height:16px;line-height:16px;font-size:13.200px;">Размеры</span>
<div style="left:808px;top:169px;width:767px;height:501px;background:#fff;border-left:1px solid #696969"></div>
<div style="left:1575px;top:146px;width:17px;height:524px;background:#f0f0f0"></div>
<div style="left:1584.5px;top:164px;width:2px;height:31.5px;background:#707070"></div>
<span id="f31" class="t lst" style="right:216.5px;top:173.0px;height:16px;line-height:16px;color:#1a1a1a;letter-spacing:-0.316px;">&lt;DIR&gt;</span>
<span id="f32" class="t lst" style="right:106px;top:173.0px;height:16px;line-height:16px;color:#1a1a1a;letter-spacing:-0.266px;">10.10.2023 13:54</span>
<span id="f33" class="t lst" style="right:216.5px;top:193.0px;height:16px;line-height:16px;color:#1a1a1a;letter-spacing:-0.316px;">&lt;DIR&gt;</span>
<span id="f34" class="t lst" style="right:106px;top:193.0px;height:16px;line-height:16px;color:#1a1a1a;letter-spacing:-0.206px;">08.11.2023 12:53</span>
<span id="f35" class="t lst" style="right:216.5px;top:213.0px;height:16px;line-height:16px;color:#1a1a1a;letter-spacing:-0.316px;">&lt;DIR&gt;</span>
<span id="f36" class="t lst" style="right:106px;top:213.0px;height:16px;line-height:16px;color:#1a1a1a;letter-spacing:-0.266px;">16.12.2023 23:35</span>
<span id="f37" class="t lst" style="left:1278px;top:233.0px;height:16px;line-height:16px;color:#1a1a1a;letter-spacing:0.714px;">jpg</span>
<span id="f38" class="t lst" style="right:216.5px;top:233.0px;height:16px;line-height:16px;color:#1a1a1a;letter-spacing:-0.232px;">75 633</span>
<span id="f39" class="t lst" style="right:106px;top:233.0px;height:16px;line-height:16px;color:#1a1a1a;letter-spacing:-0.266px;">16.09.2021 22:09</span>
<span id="f40" class="t lst" style="left:1335px;width:400px;text-align:center;top:233.0px;height:16px;line-height:16px;color:#1a1a1a;letter-spacing:-0.159px;">612 x 541</span>
<span id="f41" class="t lst" style="left:1278px;top:253.0px;height:16px;line-height:16px;color:#1a1a1a;letter-spacing:0.422px;">gif</span>
<span id="f42" class="t lst" style="right:216.5px;top:253.0px;height:16px;line-height:16px;color:#1a1a1a;letter-spacing:-0.225px;">1 024 198</span>
<span id="f43" class="t lst" style="right:106px;top:253.0px;height:16px;line-height:16px;color:#1a1a1a;letter-spacing:-0.266px;">13.01.2023 21:16</span>
<span id="f44" class="t lst" style="left:1278px;top:273.0px;height:16px;line-height:16px;color:#1a1a1a;letter-spacing:0.714px;">jpg</span>
<span id="f45" class="t lst" style="right:216.5px;top:273.0px;height:16px;line-height:16px;color:#1a1a1a;letter-spacing:-0.235px;">221 654</span>
<span id="f46" class="t lst" style="right:106px;top:273.0px;height:16px;line-height:16px;color:#1a1a1a;letter-spacing:-0.266px;">10.02.2023 14:54</span>
<span id="f47" class="t lst" style="left:1335px;width:400px;text-align:center;top:273.0px;height:16px;line-height:16px;color:#1a1a1a;letter-spacing:-0.161px;">1200 x 943</span>
<span id="f48" class="t lst" style="left:1278px;top:293.0px;height:16px;line-height:16px;color:#1a1a1a;letter-spacing:0.714px;">jpg</span>
<span id="f49" class="t lst" style="right:216.5px;top:293.0px;height:16px;line-height:16px;color:#1a1a1a;letter-spacing:-0.232px;">83 793</span>
<span id="f50" class="t lst" style="right:106px;top:293.0px;height:16px;line-height:16px;color:#1a1a1a;letter-spacing:-0.266px;">16.09.2021 22:10</span>
<span id="f51" class="t lst" style="left:1335px;width:400px;text-align:center;top:293.0px;height:16px;line-height:16px;color:#1a1a1a;letter-spacing:-0.159px;">640 x 426</span>
<span id="f52" class="t lst" style="left:1278px;top:313.0px;height:16px;line-height:16px;color:#1a1a1a;letter-spacing:0.714px;">jpg</span>
<span id="f53" class="t lst" style="right:216.5px;top:313.0px;height:16px;line-height:16px;color:#1a1a1a;letter-spacing:-0.232px;">47 330</span>
<span id="f54" class="t lst" style="right:106px;top:313.0px;height:16px;line-height:16px;color:#1a1a1a;letter-spacing:-0.266px;">16.09.2021 22:10</span>
<span id="f55" class="t lst" style="left:1335px;width:400px;text-align:center;top:313.0px;height:16px;line-height:16px;color:#1a1a1a;letter-spacing:-0.159px;">625 x 480</span>
<span id="f56" class="t lst" style="left:1278px;top:333.0px;height:16px;line-height:16px;color:#1a1a1a;letter-spacing:0.714px;">jpg</span>
<span id="f57" class="t lst" style="right:216.5px;top:333.0px;height:16px;line-height:16px;color:#1a1a1a;letter-spacing:-0.232px;">81 494</span>
<span id="f58" class="t lst" style="right:106px;top:333.0px;height:16px;line-height:16px;color:#1a1a1a;letter-spacing:-0.266px;">16.09.2021 22:10</span>
<span id="f59" class="t lst" style="left:1335px;width:400px;text-align:center;top:333.0px;height:16px;line-height:16px;color:#1a1a1a;letter-spacing:-0.159px;">894 x 894</span>
<span id="f60" class="t lst" style="left:1278px;top:353.0px;height:16px;line-height:16px;color:#1a1a1a;letter-spacing:0.422px;">gif</span>
<span id="f61" class="t lst" style="right:216.5px;top:353.0px;height:16px;line-height:16px;color:#1a1a1a;letter-spacing:-0.235px;">967 536</span>
<span id="f62" class="t lst" style="right:106px;top:353.0px;height:16px;line-height:16px;color:#1a1a1a;letter-spacing:-0.266px;">13.06.2023 20:45</span>
<span id="f63" class="t lst" style="left:1278px;top:373.0px;height:16px;line-height:16px;color:#1a1a1a;letter-spacing:0.714px;">jpg</span>
<span id="f64" class="t lst" style="right:216.5px;top:373.0px;height:16px;line-height:16px;color:#1a1a1a;letter-spacing:-0.232px;">82 014</span>
<span id="f65" class="t lst" style="right:106px;top:373.0px;height:16px;line-height:16px;color:#1a1a1a;letter-spacing:-0.206px;">29.03.2023 0:48</span>
<span id="f66" class="t lst" style="left:1335px;width:400px;text-align:center;top:373.0px;height:16px;line-height:16px;color:#1a1a1a;letter-spacing:-0.161px;">1303 x 813</span>
<span id="f67" class="t lst" style="left:1278px;top:393.0px;height:16px;line-height:16px;color:#1a1a1a;letter-spacing:0.714px;">jpg</span>
<span id="f68" class="t lst" style="right:216.5px;top:393.0px;height:16px;line-height:16px;color:#1a1a1a;letter-spacing:-0.235px;">148 799</span>
<span id="f69" class="t lst" style="right:106px;top:393.0px;height:16px;line-height:16px;color:#1a1a1a;letter-spacing:-0.206px;">02.08.2023 0:08</span>
<span id="f70" class="t lst" style="left:1335px;width:400px;text-align:center;top:393.0px;height:16px;line-height:16px;color:#1a1a1a;letter-spacing:-0.161px;">1600 x 900</span>
<span id="f71" class="t lst" style="left:1278px;top:413.0px;height:16px;line-height:16px;color:#1a1a1a;letter-spacing:0.714px;">jpg</span>
<span id="f72" class="t lst" style="right:216.5px;top:413.0px;height:16px;line-height:16px;color:#1a1a1a;letter-spacing:-0.232px;">25 940</span>
<span id="f73" class="t lst" style="right:106px;top:413.0px;height:16px;line-height:16px;color:#1a1a1a;letter-spacing:-0.206px;">13.11.2023 13:43</span>
<span id="f74" class="t lst" style="left:1335px;width:400px;text-align:center;top:413.0px;height:16px;line-height:16px;color:#1a1a1a;letter-spacing:-0.159px;">541 x 359</span>
<span id="f75" class="t lst" style="left:1278px;top:433.0px;height:16px;line-height:16px;color:#1a1a1a;letter-spacing:0.714px;">jpg</span>
<span id="f76" class="t lst" style="right:216.5px;top:433.0px;height:16px;line-height:16px;color:#1a1a1a;letter-spacing:-0.232px;">96 506</span>
<span id="f77" class="t lst" style="right:106px;top:433.0px;height:16px;line-height:16px;color:#1a1a1a;letter-spacing:-0.266px;">15.01.2023 12:14</span>
<span id="f78" class="t lst" style="left:1335px;width:400px;text-align:center;top:433.0px;height:16px;line-height:16px;color:#1a1a1a;letter-spacing:-0.159px;">480 x 602</span>
<span id="f79" class="t lst" style="left:1278px;top:453.0px;height:16px;line-height:16px;color:#1a1a1a;letter-spacing:0.714px;">jpg</span>
<span id="f80" class="t lst" style="right:216.5px;top:453.0px;height:16px;line-height:16px;color:#1a1a1a;letter-spacing:-0.232px;">64 201</span>
<span id="f81" class="t lst" style="right:106px;top:453.0px;height:16px;line-height:16px;color:#1a1a1a;letter-spacing:-0.266px;">17.12.2022 17:44</span>
<span id="f82" class="t lst" style="left:1335px;width:400px;text-align:center;top:453.0px;height:16px;line-height:16px;color:#1a1a1a;letter-spacing:-0.159px;">446 x 600</span>
<span id="f83" class="t lst" style="left:1278px;top:473.0px;height:16px;line-height:16px;color:#1a1a1a;letter-spacing:0.714px;">jpg</span>
<span id="f84" class="t lst" style="right:216.5px;top:473.0px;height:16px;line-height:16px;color:#1a1a1a;letter-spacing:-0.235px;">403 245</span>
<span id="f85" class="t lst" style="right:106px;top:473.0px;height:16px;line-height:16px;color:#1a1a1a;letter-spacing:-0.266px;">03.08.2023 14:54</span>
<span id="f86" class="t lst" style="left:1335px;width:400px;text-align:center;top:473.0px;height:16px;line-height:16px;color:#1a1a1a;letter-spacing:-0.163px;">2218 x 1330</span>
<span id="f87" class="t lst" style="left:1278px;top:493.0px;height:16px;line-height:16px;color:#1a1a1a;letter-spacing:0.714px;">jpg</span>
<span id="f88" class="t lst" style="right:216.5px;top:493.0px;height:16px;line-height:16px;color:#1a1a1a;letter-spacing:-0.235px;">501 359</span>
<span id="f89" class="t lst" style="right:106px;top:493.0px;height:16px;line-height:16px;color:#1a1a1a;letter-spacing:-0.266px;">03.08.2023 14:54</span>
<span id="f90" class="t lst" style="left:1335px;width:400px;text-align:center;top:493.0px;height:16px;line-height:16px;color:#1a1a1a;letter-spacing:-0.163px;">2218 x 1330</span>
<span id="f91" class="t lst" style="left:1278px;top:513.0px;height:16px;line-height:16px;color:#1a1a1a;letter-spacing:0.714px;">jpg</span>
<span id="f92" class="t lst" style="right:216.5px;top:513.0px;height:16px;line-height:16px;color:#1a1a1a;letter-spacing:-0.235px;">363 145</span>
<span id="f93" class="t lst" style="right:106px;top:513.0px;height:16px;line-height:16px;color:#1a1a1a;letter-spacing:-0.266px;">03.08.2023 14:54</span>
<span id="f94" class="t lst" style="left:1335px;width:400px;text-align:center;top:513.0px;height:16px;line-height:16px;color:#1a1a1a;letter-spacing:-0.163px;">2218 x 1330</span>
<span class="t lst" style="left:1278px;top:533.0px;height:16px;line-height:16px;color:#1a1a1a;">we...</span>
<span id="f95" class="t lst" style="right:216.5px;top:533.0px;height:16px;line-height:16px;color:#1a1a1a;letter-spacing:-0.235px;">218 212</span>
<span id="f96" class="t lst" style="right:106px;top:533.0px;height:16px;line-height:16px;color:#1a1a1a;letter-spacing:-0.266px;">03.08.2023 15:07</span>
<span id="f97" class="t lst" style="left:1278px;top:553.0px;height:16px;line-height:16px;color:#1a1a1a;letter-spacing:0.714px;">jpg</span>
<span id="f98" class="t lst" style="right:216.5px;top:553.0px;height:16px;line-height:16px;color:#1a1a1a;letter-spacing:-0.232px;">72 335</span>
<span id="f99" class="t lst" style="right:106px;top:553.0px;height:16px;line-height:16px;color:#1a1a1a;letter-spacing:-0.266px;">24.12.2020 18:36</span>
<span id="f100" class="t lst" style="left:1335px;width:400px;text-align:center;top:553.0px;height:16px;line-height:16px;color:#1a1a1a;letter-spacing:-0.161px;">528 x 1000</span>
<span id="f101" class="t lst" style="left:1278px;top:573.0px;height:16px;line-height:16px;color:#1a1a1a;letter-spacing:0.714px;">jpg</span>
<span id="f102" class="t lst" style="right:216.5px;top:573.0px;height:16px;line-height:16px;color:#1a1a1a;letter-spacing:-0.232px;">83 578</span>
<span id="f103" class="t lst" style="right:106px;top:573.0px;height:16px;line-height:16px;color:#1a1a1a;letter-spacing:-0.266px;">16.09.2021 22:09</span>
<span id="f104" class="t lst" style="left:1335px;width:400px;text-align:center;top:573.0px;height:16px;line-height:16px;color:#1a1a1a;letter-spacing:-0.159px;">640 x 764</span>
<span id="f105" class="t lst" style="left:1278px;top:593.0px;height:16px;line-height:16px;color:#1a1a1a;letter-spacing:0.714px;">jpg</span>
<span id="f106" class="t lst" style="right:216.5px;top:593.0px;height:16px;line-height:16px;color:#1a1a1a;letter-spacing:-0.232px;">84 136</span>
<span id="f107" class="t lst" style="right:106px;top:593.0px;height:16px;line-height:16px;color:#1a1a1a;letter-spacing:-0.206px;">23.10.2021 11:14</span>
<span id="f108" class="t lst" style="left:1335px;width:400px;text-align:center;top:593.0px;height:16px;line-height:16px;color:#1a1a1a;letter-spacing:-0.159px;">600 x 840</span>
<span id="f109" class="t lst" style="left:1278px;top:613.0px;height:16px;line-height:16px;color:#1a1a1a;letter-spacing:0.714px;">jpg</span>
<span id="f110" class="t lst" style="right:216.5px;top:613.0px;height:16px;line-height:16px;color:#1a1a1a;letter-spacing:-0.232px;">47 884</span>
<span id="f111" class="t lst" style="right:106px;top:613.0px;height:16px;line-height:16px;color:#1a1a1a;letter-spacing:-0.266px;">21.02.2022 23:23</span>
<span id="f112" class="t lst" style="left:1335px;width:400px;text-align:center;top:613.0px;height:16px;line-height:16px;color:#1a1a1a;letter-spacing:-0.159px;">640 x 535</span>
<span id="f113" class="t lst" style="left:1278px;top:633.0px;height:16px;line-height:16px;color:#1a1a1a;letter-spacing:0.714px;">jpg</span>
<span id="f114" class="t lst" style="right:216.5px;top:633.0px;height:16px;line-height:16px;color:#1a1a1a;letter-spacing:-0.232px;">79 694</span>
<span id="f115" class="t lst" style="right:106px;top:633.0px;height:16px;line-height:16px;color:#1a1a1a;letter-spacing:-0.266px;">15.06.2022 13:47</span>
<span id="f116" class="t lst" style="left:1335px;width:400px;text-align:center;top:633.0px;height:16px;line-height:16px;color:#1a1a1a;letter-spacing:-0.159px;">640 x 640</span>
<span id="f117" class="t lst" style="left:1278px;top:653.0px;height:16px;line-height:16px;color:#1a1a1a;letter-spacing:0.714px;">jpg</span>
<span id="f118" class="t lst" style="right:216.5px;top:653.0px;height:16px;line-height:16px;color:#1a1a1a;letter-spacing:-0.232px;">28 521</span>
<span id="f119" class="t lst" style="right:106px;top:653.0px;height:16px;line-height:16px;color:#1a1a1a;letter-spacing:-0.266px;">20.07.2022 15:57</span>
<span id="f120" class="t lst" style="left:1335px;width:400px;text-align:center;top:653.0px;height:16px;line-height:16px;color:#1a1a1a;letter-spacing:-0.159px;">640 x 336</span>
<svg style="left:811px;top:173px" width="16" height="16" viewBox="0 0 16 16"><path d="M.8 5.500L5.800 .8l.9 1.200-2.300 2.800h5.600v1.500H4.400l2.300 2.800-.9 1.200z" fill="#000"/><path d="M5.800 11h2v2.500h-2zM9.800 11h2v2.500h-2zM13.800 11h2v2.500h-2z" fill="#000"/></svg>
<div style="left:831px;top:183px;width:2px;height:2px;background:#000"></div>
<div style="left:834px;top:183px;width:2px;height:2px;background:#000"></div>
<svg style="left:812px;top:192px" width="16" height="16" viewBox="0 0 16 16"><path d="M0 2.200C0 1.500.5 1 1.200 1h4.300l1.700 1.700H15c.6 0 1 .4 1 1V13c0 .6-.4 1-1 1H1c-.6 0-1-.4-1-1z" fill="#e8a52a"/><path d="M0 4.600c0-.6.400-1 1-1H15c.6 0 1 .4 1 1V13c0 .6-.4 1-1 1H1c-.6 0-1-.4-1-1z" fill="url(#fg)"/></svg>
<svg style="left:811px;top:653.5px" width="16" height="16" viewBox="0 0 16 16"><path d="M2.500 .5h8l4 4v11h-12z" fill="#fff" stroke="#9a9a9a"/><path d="M4 9.500h9v5H4z" fill="#c9d9ea"/><path d="M0 3.500h12.500v7H0z" fill="#d81e1e"/><text x=".7" y="9.300" font-family="Liberation Sans" font-weight="bold" font-size="6" fill="#fff">JPG</text></svg>
<span id="f121" class="t lst" style="left:830px;top:653.0px;height:16px;line-height:16px;color:#1a1a1a;letter-spacing:-0.730px;">229558_1</span>
<div style="left:2px;top:698px;width:794px;height:1px;background:#696969"></div>
<div style="left:2px;top:699px;width:796px;height:1px;background:#fafafa"></div>
<span class="t seg" style="left:14px;top:675.5px;height:16px;line-height:16px;font-size:11.700px;">Выбрано 0 Б/0 Б; файлов 0/0, каталогов 0/13</span>
<div style="left:661px;top:675px;width:101px;height:18px;background:#fff;border:1px solid #555"></div>
<span class="t seg" style="left:666px;top:674.5px;height:16px;line-height:16px;font-size:13px;">*.*</span>
<svg style="left:768.0px;top:675px" width="17" height="17" viewBox="0 0 16 16"><path d="M.8 2.500C.8 1 15.200 1 15.200 2.500L9.800 9v5.500L6.200 13V9z" fill="#6db6f0" stroke="#2f86d0" stroke-width=".9"/><ellipse cx="8" cy="2.600" rx="6.400" ry="1.300" fill="#b9dcf8" stroke="#2f86d0" stroke-width=".7"/></svg>
<div style="left:5px;top:699px;width:80px;height:21px;background:#8fb9ee;border-right:1px solid #7aa3d6;border-bottom:1px solid #7aa3d6"></div>
<svg style="left:10px;top:706px" width="15" height="8" viewBox="0 0 15 8"><path d="M2.500.5h10L15 4v3.500H0V4z" fill="#d9dde2"/><path d="M0 4h15v3.500H0z" fill="#3a3a3a"/><path d="M1.500 5.800h2" stroke="#7fe08a" stroke-width="1"/></svg>
<span id="f122" class="t lst" style="left:29px;top:702.0px;height:16px;line-height:16px;font-size:13px;letter-spacing:0.758px;">[D:] \</span>
<svg style="left:69px;top:704.500px" width="8" height="8" viewBox="0 0 8 8"><path d="M1 1l6 6M7 1L1 7" stroke="#bcd5f5" stroke-width="1.100"/></svg>
<div style="left:804px;top:698px;width:794px;height:1px;background:#696969"></div>
<div style="left:804px;top:699px;width:794px;height:1px;background:#fafafa"></div>
<span class="t seg" style="left:815px;top:675.5px;height:16px;line-height:16px;font-size:11.700px;">Выбрано 0 Б/205 МБ; файлов 0/366, каталогов 0/2</span>
<div style="left:1463px;top:675px;width:101px;height:18px;background:#fff;border:1px solid #555"></div>
<span class="t seg" style="left:1468px;top:674.5px;height:16px;line-height:16px;font-size:13px;">*.*</span>
<svg style="left:1569.5px;top:675px" width="17" height="17" viewBox="0 0 16 16"><path d="M.8 2.500C.8 1 15.200 1 15.200 2.500L9.800 9v5.500L6.200 13V9z" fill="#6db6f0" stroke="#2f86d0" stroke-width=".9"/><ellipse cx="8" cy="2.600" rx="6.400" ry="1.300" fill="#b9dcf8" stroke="#2f86d0" stroke-width=".7"/></svg>
<div style="left:806px;top:699px;width:118px;height:21px;background:#8fb9ee;border-right:1px solid #7aa3d6;border-bottom:1px solid #7aa3d6"></div>
<svg style="left:811px;top:706px" width="15" height="8" viewBox="0 0 15 8"><path d="M2.500.5h10L15 4v3.500H0V4z" fill="#d9dde2"/><path d="M0 4h15v3.500H0z" fill="#3a3a3a"/><path d="M1.500 5.800h2" stroke="#7fe08a" stroke-width="1"/></svg>
<span id="f123" class="t lst" style="left:830px;top:702.0px;height:16px;line-height:16px;font-size:13px;letter-spacing:-0.061px;">[D:] Pictures</span>
<svg style="left:908px;top:704.500px" width="8" height="8" viewBox="0 0 8 8"><path d="M1 1l6 6M7 1L1 7" stroke="#bcd5f5" stroke-width="1.100"/></svg>
<div style="left:0px;top:722px;width:1600px;height:4px;background:#f9f9f9"></div>
<div class="bbc" style="left:-45.9px;top:732.5px;width:300px;height:18px"><span style="position:relative;display:inline-block;height:18px">Справка</span></div>
<div class="bbc" style="left:153.2px;top:732.5px;width:300px;height:18px"><span style="position:relative;display:inline-block;height:18px"><svg width="16" height="16" viewBox="0 0 16 16" style="left:-20px;top:1px"><path d="M.5 1.500h8l3.500 3.500v9.500h-11.500z" fill="url(#dg)" stroke="#2f7fc4"/><path d="M1.500 9h9.500v5h-9.500z" fill="#9fc8ee" fill-opacity=".55"/><path d="M8.500 1.500v3.500h3.500" fill="#fff" stroke="#2f7fc4"/><circle cx="10.500" cy="9.500" r="5" fill="#6cc23a" stroke="#3a8a1a" stroke-width=".6"/><path d="M7.500 9a3 3 0 0 1 5-1.500l.8-.8v2.800h-2.800l.9-.9a1.800 1.800 0 0 0-2.700.9zM13.500 10a3 3 0 0 1-5 1.500l-.8.8v-2.800h2.800l-.9.900a1.800 1.800 0 0 0 2.700-.9z" fill="#fff"/></svg>Обновить (F2)</span></div>
<div class="bbc" style="left:352.3px;top:732.5px;width:300px;height:18px"><span style="position:relative;display:inline-block;height:18px"><svg width="16" height="16" viewBox="0 0 16 16" style="left:-20px;top:1px"><path d="M.5 1.500h8l3.500 3.500v9.500h-11.500z" fill="url(#dg)" stroke="#2f7fc4"/><path d="M1.500 9h9.500v5h-9.500z" fill="#9fc8ee" fill-opacity=".55"/><path d="M8.500 1.500v3.500h3.500" fill="#fff" stroke="#2f7fc4"/><circle cx="7.500" cy="8" r="4" fill="#d8ebfb" fill-opacity=".8" stroke="#7b8794" stroke-width="1.200"/><path d="M10.500 11.500l3.500 3.500" stroke="#d99a4e" stroke-width="2"/></svg>Просмотр (F3)</span></div>
<div class="bbc" style="left:551.4px;top:732.5px;width:300px;height:18px"><span style="position:relative;display:inline-block;height:18px"><svg width="16" height="16" viewBox="0 0 16 16" style="left:-20px;top:1px"><path d="M.5 1.500h8l3.500 3.500v9.500h-11.500z" fill="url(#dg)" stroke="#2f7fc4"/><path d="M1.500 9h9.500v5h-9.500z" fill="#9fc8ee" fill-opacity=".55"/><path d="M8.500 1.500v3.500h3.500" fill="#fff" stroke="#2f7fc4"/><path d="M6.500 13.500l1-3 6-6 2 2-6 6z" fill="#f0b83a" stroke="#a2701a" stroke-width=".7"/><path d="M13 5l2 2" stroke="#c75aa0" stroke-width="1.500"/></svg>Правка (F4)</span></div>
<div class="bbc" style="left:750.6px;top:732.5px;width:300px;height:18px"><span style="position:relative;display:inline-block;height:18px"><svg width="16" height="16" viewBox="0 0 16 16" style="left:-20px;top:1px"><path d="M.5 1.500h8l3.500 3.500v9.500h-11.500z" fill="url(#dg)" stroke="#2f7fc4"/><path d="M1.500 9h9.500v5h-9.500z" fill="#9fc8ee" fill-opacity=".55"/><path d="M8.500 1.500v3.500h3.500" fill="#fff" stroke="#2f7fc4"/><circle cx="12" cy="12" r="3.600" fill="#58b530" stroke="#2f8a12" stroke-width=".6"/><path d="M9.800 12h4.400M12 9.800v4.400" stroke="#fff" stroke-width="1.200"/></svg>Копировать (F5)</span></div>
<div class="bbc" style="left:949.7px;top:732.5px;width:300px;height:18px"><span style="position:relative;display:inline-block;height:18px"><svg width="16" height="16" viewBox="0 0 16 16" style="left:-20px;top:1px"><path d="M.5 1.500h8l3.500 3.500v9.500h-11.500z" fill="url(#dg)" stroke="#2f7fc4"/><path d="M1.500 9h9.500v5h-9.500z" fill="#9fc8ee" fill-opacity=".55"/><path d="M8.500 1.500v3.500h3.500" fill="#fff" stroke="#2f7fc4"/><path d="M7 10.500h4V8l4.500 4-4.500 4v-2.500H7z" fill="#7cc527" stroke="#3f8a12" stroke-width=".7"/></svg>Переместить (F6)</span></div>
<div class="bbc" style="left:1148.8px;top:732.5px;width:300px;height:18px"><span style="position:relative;display:inline-block;height:18px"><svg width="16" height="16" viewBox="0 0 16 16" style="left:-20px;top:1px"><path d="M.5 2.500C.5 2 1 1.500 1.500 1.500h4l1.500 1.500H14c.6 0 1 .4 1 1v9c0 .6-.4 1-1 1H1.500c-.6 0-1-.4-1-1z" fill="#f3c34d" stroke="#d29d21" stroke-width=".8"/><path d="M1 5h13.500v8.500h-13.500z" fill="#fbe18f"/><circle cx="12" cy="12" r="3.600" fill="#58b530" stroke="#2f8a12" stroke-width=".6"/><path d="M9.800 12h4.400M12 9.800v4.400" stroke="#fff" stroke-width="1.200"/></svg>Новый каталог (F7)</span></div>
<div class="bbc" style="left:1347.9px;top:732.5px;width:300px;height:18px"><span style="position:relative;display:inline-block;height:18px"><svg width="16" height="16" viewBox="0 0 16 16" style="left:-20px;top:1px"><path d="M.5 1.500h8l3.500 3.500v9.500h-11.500z" fill="url(#dg)" stroke="#2f7fc4"/><path d="M1.500 9h9.500v5h-9.500z" fill="#9fc8ee" fill-opacity=".55"/><path d="M8.500 1.500v3.500h3.500" fill="#fff" stroke="#2f7fc4"/><circle cx="12" cy="12" r="3.600" fill="#e04a3a" stroke="#a82a1c" stroke-width=".6"/><path d="M10 12h4" stroke="#fff" stroke-width="1.400"/></svg>Удалить (F8)</span></div>
<div class="bbc" style="left:-45.9px;top:759.5px;width:300px;height:18px"><span style="position:relative;display:inline-block;height:18px"><svg width="16" height="16" viewBox="0 0 16 16" style="left:-20px;top:1px"><path d="M1 6.500h13v3.700H1z" fill="#3c3c3c"/><path d="M1 6.200h13" stroke="#8a8a8a" stroke-width=".6"/><path d="M2 8.800h1.500" stroke="#7fe0a0" stroke-width=".8"/></svg>C:\</span></div>
<div class="bbc" style="left:153.2px;top:759.5px;width:300px;height:18px"><span style="position:relative;display:inline-block;height:18px"><svg width="16" height="16" viewBox="0 0 16 16" style="left:-20px;top:1px"><path d="M1 6.500h13v3.700H1z" fill="#3c3c3c"/><path d="M1 6.200h13" stroke="#8a8a8a" stroke-width=".6"/><path d="M2 8.800h1.500" stroke="#7fe0a0" stroke-width=".8"/></svg>D:\</span></div>
<div class="bbc" style="left:352.3px;top:759.5px;width:300px;height:18px"><span style="position:relative;display:inline-block;height:18px"><svg width="16" height="16" viewBox="0 0 16 16" style="left:-20px;top:1px"><path d="M1 6.500h13v3.700H1z" fill="#3c3c3c"/><path d="M1 6.200h13" stroke="#8a8a8a" stroke-width=".6"/><path d="M2 8.800h1.500" stroke="#7fe0a0" stroke-width=".8"/></svg>E:\</span></div>
<div class="bbc" style="left:551.4px;top:759.5px;width:300px;height:18px"><span style="position:relative;display:inline-block;height:18px"><svg width="16" height="16" viewBox="0 0 16 16" style="left:-20px;top:1px"><path d="M1 6.500h13v3.700H1z" fill="#3c3c3c"/><path d="M1 6.200h13" stroke="#8a8a8a" stroke-width=".6"/><path d="M2 8.800h1.500" stroke="#7fe0a0" stroke-width=".8"/></svg>F:\</span></div>
<div class="bbc" style="left:750.6px;top:759.5px;width:300px;height:18px"><span style="position:relative;display:inline-block;height:18px"><svg width="16" height="16" viewBox="0 0 16 16" style="left:-20px;top:1px"><path d="M1 6.500h13v3.700H1z" fill="#3c3c3c"/><path d="M1 6.200h13" stroke="#8a8a8a" stroke-width=".6"/><path d="M2 8.800h1.500" stroke="#7fe0a0" stroke-width=".8"/></svg>G:\</span></div>
<div class="bbc" style="left:949.7px;top:759.5px;width:300px;height:18px"><span style="position:relative;display:inline-block;height:18px"><svg width="16" height="16" viewBox="0 0 16 16" style="left:-20px;top:1px"><path d="M1 4h6v5H1zM1 10h6v5H1zM8 10h6v5H8z" fill="#3fa0e8" stroke="#1e6fb4" stroke-width=".8"/><path d="M9 2.500l5.500 1.500-1.500 5-5.500-1.500z" fill="#6fc0f4" stroke="#1e6fb4" stroke-width=".8"/></svg>Реестр: HKCU</span></div>
<div class="bbc" style="left:1148.8px;top:759.5px;width:300px;height:18px"><span style="position:relative;display:inline-block;height:18px">Воспр. музыку из каталога</span></div>
<div class="bbc" style="left:1347.9px;top:759.5px;width:300px;height:18px"><span style="position:relative;display:inline-block;height:18px"><svg width="16" height="16" viewBox="0 0 16 16" style="left:-20px;top:1px"><g transform="rotate(4 8 8)"><path d="M3.500 3h11v12h-11z" fill="#fff" stroke="#e3e6ea" stroke-width=".6"/><path d="M1.500 2.500h11.500l-.5 9.500-1.500 2H1z" fill="#a6d3ec"/><path d="M2 5h10.500M2 6.800h10.500M2 8.600h10.500M2 10.400h10.300M2 12.200h9.500" stroke="#86bcdd" stroke-width=".6"/><path d="M2.500 1.300v2M4.300 1.300v2M6.100 1.300v2M7.900 1.300v2M9.700 1.300v2M11.500 1.300v2" stroke="#5a6874" stroke-width=".8"/></g></svg>Блокнот</span></div>
<div class="bbc" style="left:-45.9px;top:786.5px;width:300px;height:18px"><span style="position:relative;display:inline-block;height:18px">Показать всё</span></div>
<div class="bbc" style="left:153.2px;top:786.5px;width:300px;height:18px"><span style="position:relative;display:inline-block;height:18px">Скрыть каталоги</span></div>
<div class="bbc" style="left:352.3px;top:786.5px;width:300px;height:18px"><span style="position:relative;display:inline-block;height:18px">Скрыть исполняемые</span></div>
<div class="bbc" style="left:551.4px;top:786.5px;width:300px;height:18px"><span style="position:relative;display:inline-block;height:18px">Скрыть DLL</span></div>
<div class="bbc" style="left:750.6px;top:786.5px;width:300px;height:18px"><span style="position:relative;display:inline-block;height:18px">Инвертировать выделение</span></div>
<div class="bbc" style="left:1148.8px;top:786.5px;width:300px;height:18px"><span style="position:relative;display:inline-block;height:18px"><svg width="16" height="16" viewBox="0 0 16 16" style="left:-20px;top:1px"><path d="M0 0h16v16H0z" fill="#7e7e7e"/><path d="M3.800 1.800h8.400v12.400H3.800z" fill="#f6f6f6"/><path d="M5 3.200h6v2.600H5z" fill="#8a8a8a"/><path d="M5 7.200h1.500v1.500H5zM7.250 7.200h1.500v1.500h-1.500zM9.500 7.200H11v1.500H9.500zM5 9.400h1.500v1.500H5zM7.250 9.400h1.500v1.500h-1.500zM9.500 9.400H11v1.500H9.500zM5 11.600h1.500v1.500H5zM7.250 11.600h1.500v1.500h-1.500zM9.500 11.600H11v1.500H9.500z" fill="#8a8a8a"/></svg>Калькулятор</span></div>
<div class="bbc" style="left:1347.9px;top:786.5px;width:300px;height:18px"><span style="position:relative;display:inline-block;height:18px">Управление компьютером</span></div>
<div class="bbc" style="left:-45.9px;top:813.5px;width:300px;height:18px"><span style="position:relative;display:inline-block;height:18px">Выделить всё</span></div>
<div class="bbc" style="left:153.2px;top:813.5px;width:300px;height:18px"><span style="position:relative;display:inline-block;height:18px">Выделить MP3</span></div>
<div class="bbc" style="left:352.3px;top:813.5px;width:300px;height:18px"><span style="position:relative;display:inline-block;height:18px">Выделить картинки</span></div>
<div class="bbc" style="left:551.4px;top:813.5px;width:300px;height:18px"><span style="position:relative;display:inline-block;height:18px">Запомнить выделение</span></div>
<div class="bbc" style="left:750.6px;top:813.5px;width:300px;height:18px"><span style="position:relative;display:inline-block;height:18px">Выделить недостающие</span></div>
<div class="bbc" style="left:949.7px;top:813.5px;width:300px;height:18px"><span style="position:relative;display:inline-block;height:18px">Выделить дубликаты</span></div>
<div class="bbc" style="left:1148.8px;top:813.5px;width:300px;height:18px"><span style="position:relative;display:inline-block;height:18px">Диспетчер задач</span></div>
<div class="bbc" style="left:1347.9px;top:813.5px;width:300px;height:18px"><span style="position:relative;display:inline-block;height:18px">Режим мастера (Вкл/Выкл)</span></div>
<div style="left:0px;top:838px;width:1600px;height:1px;background:#a0a0a0"></div>
<div style="left:465px;top:196px;width:601px;height:464px;background:#f0f0f0;border:1px solid #2a93dc;border-radius:5px 5px 4px 4px;box-shadow:0 3px 10px rgba(0,0,0,.10),0 0 2px rgba(0,0,0,.08)"></div>
<div style="left:465px;top:196px;width:601px;height:31px;background:#0078d7;border-radius:5px 5px 0 0"></div>
<span class="t seg" style="left:474px;top:204.0px;height:16px;line-height:16px;color:#fff;">Поиск файлов</span>
<div style="left:1045px;top:204px;width:18px;height:18px;background:#c75050"></div>
<svg style="left:1051px;top:210.500px" width="6" height="6" viewBox="0 0 6 6"><path d="M.7.700l4.600 4.600M5.300.7L.7 5.300" stroke="#fff" stroke-width="1.500"/></svg>
<div style="left:477px;top:250.5px;width:464px;height:69.0px;border:1px solid #dcdcdc"></div>
<div style="left:484px;top:248.5px;width:93px;height:5px;background:#f0f0f0"></div>
<span id="f124" class="t dlg b" style="left:488px;top:242.0px;height:16px;line-height:16px;letter-spacing:0.438px;">Искать файлы</span>
<div style="left:484px;top:264px;width:446px;height:21px;background:#fff;border:1px solid #8a8a8a"></div>
<svg style="left:915px;top:271.5px" width="11" height="7" viewBox="0 0 11 7"><path d="M.5.500L5.500 5.500 10.500.5" fill="none" stroke="#444" stroke-width="1.100"/></svg>
<div style="left:492px;top:267px;width:1px;height:13px;background:#000"></div>
<svg style="left:492px;top:294.5px" width="14" height="14" viewBox="0 0 14 14"><circle cx="7" cy="7" r="6" fill="#fafafa" stroke="#8a8a8a" stroke-width="1"/></svg>
<span class="t dlg" style="left:508px;top:294.0px;height:16px;line-height:16px;">Символы</span>
<svg style="left:585px;top:294.5px" width="14" height="14" viewBox="0 0 14 14"><circle cx="7" cy="7" r="6.500" fill="#0067c0"/><circle cx="7" cy="7" r="2.600" fill="#fff"/></svg>
<span class="t dlg" style="left:601px;top:294.0px;height:16px;line-height:16px;">Маска (&#x27;*&#x27;)</span>
<svg style="left:680px;top:294.5px" width="14" height="14" viewBox="0 0 14 14"><circle cx="7" cy="7" r="6" fill="#fafafa" stroke="#8a8a8a" stroke-width="1"/></svg>
<span class="t dlg" style="left:696px;top:294.0px;height:16px;line-height:16px;">RegExp</span>
<div style="left:949px;top:246px;width:103px;height:21px;background:#fdfdfd;border:1px solid #d0d0d0;border-radius:4px;border:1.500px solid #0078d7;background:#fff"></div>
<span id="f125" class="t dlg" style="left:800.5px;width:400px;text-align:center;top:248.7px;height:16px;line-height:16px;letter-spacing:0.184px;">Начать поиск</span>
<div style="left:950px;top:274px;width:101px;height:18.5px;background:#fdfdfd;border:1px solid #d0d0d0;border-radius:4px;background:#f5f5f5;border-color:#eee"></div>
<span class="t dlg" style="left:800.5px;width:400px;text-align:center;top:275.45px;height:16px;line-height:16px;color:#9a9a9a;">Отмена</span>
<div style="left:949.5px;top:300.5px;width:102.0px;height:20.0px;background:#fdfdfd;border:1px solid #d0d0d0;border-radius:4px;"></div>
<span class="t dlg" style="left:800.5px;width:400px;text-align:center;top:302.7px;height:16px;line-height:16px;">Clear All</span>
<div style="left:477px;top:330px;width:576px;height:76.5px;border:1px solid #dcdcdc"></div>
<div style="left:484px;top:328px;width:89.5px;height:5px;background:#f0f0f0"></div>
<span id="f126" class="t dlg b" style="left:488px;top:321.5px;height:16px;line-height:16px;letter-spacing:0.613px;">Место поиска</span>
<div style="left:484px;top:342.5px;width:468px;height:22.0px;background:#fff;border:1px solid #8a8a8a"></div>
<svg style="left:937px;top:350.5px" width="11" height="7" viewBox="0 0 11 7"><path d="M.5.500L5.500 5.500 10.500.5" fill="none" stroke="#444" stroke-width="1.100"/></svg>
<span class="t dlg" style="left:493px;top:345.0px;height:16px;line-height:16px;font-size:14px;">D:\Lenouser\Pictures\</span>
<div style="left:956.5px;top:343.5px;width:21.0px;height:20.0px;background:#fdfdfd;border:1px solid #d0d0d0;border-radius:4px;"></div>
<span class="t dlg" style="left:767.0px;width:400px;text-align:center;top:345.7px;height:16px;line-height:16px;">&lt;</span>
<div style="left:983.5px;top:343.5px;width:57.0px;height:20.0px;background:#fdfdfd;border:1px solid #d0d0d0;border-radius:4px;"></div>
<span class="t dlg" style="left:812.0px;width:400px;text-align:center;top:345.7px;height:16px;line-height:16px;">Сброс</span>
<span class="t dlg" style="left:486px;top:374.0px;height:16px;line-height:16px;">Вложенность</span>
<div style="left:558px;top:372.5px;width:62.5px;height:20.0px;background:#e1e1e1;border:1px solid #adadad"></div>
<span class="t dlg" style="left:562px;top:374.0px;height:16px;line-height:16px;">Все</span>
<svg style="left:605.5px;top:379.5px" width="11" height="7" viewBox="0 0 11 7"><path d="M.5.500L5.500 5.500 10.500.5" fill="none" stroke="#444" stroke-width="1.100"/></svg>
<span class="t dlg" style="left:662px;top:375.5px;height:16px;line-height:16px;">Исключать</span>
<div style="left:725px;top:374px;width:192px;height:19.5px;background:#fff;border-bottom:1px solid #868686"></div>
<div style="left:477px;top:416px;width:576px;height:118.5px;border:1px solid #dcdcdc"></div>
<div style="left:484px;top:414px;width:68.5px;height:5px;background:#f0f0f0"></div>
<span id="f127" class="t dlg b" style="left:488px;top:407.5px;height:16px;line-height:16px;letter-spacing:0.729px;">С текстом</span>
<div style="left:498.5px;top:421px;width:5.5px;height:1px;background:#000"></div>
<div style="left:485px;top:430px;width:523px;height:20px;background:#fff;border-bottom:1px solid #868686"></div>
<div style="left:1013.5px;top:431px;width:24.0px;height:17.5px;background:#fdfdfd;border:1px solid #d0d0d0;border-radius:4px;"></div>
<span class="t dlg" style="left:825.5px;width:400px;text-align:center;top:431.95px;height:16px;line-height:16px;">*</span>
<span class="t dlg" style="left:550px;top:460.0px;height:16px;line-height:16px;">Тип поиска :</span>
<div style="left:619px;top:458px;width:95px;height:21px;background:#e1e1e1;border:1px solid #adadad"></div>
<span class="t dlg" style="left:623px;top:460.0px;height:16px;line-height:16px;">Содержит</span>
<svg style="left:699px;top:465.5px" width="11" height="7" viewBox="0 0 11 7"><path d="M.5.500L5.500 5.500 10.500.5" fill="none" stroke="#444" stroke-width="1.100"/></svg>
<span class="t dlg" style="left:550px;top:490.5px;height:16px;line-height:16px;">Кодировка:</span>
<div style="left:619px;top:489px;width:95px;height:20.5px;background:#e1e1e1;border:1px solid #adadad"></div>
<span class="t dlg" style="left:623px;top:490.75px;height:16px;line-height:16px;">Авто</span>
<svg style="left:699px;top:496.25px" width="11" height="7" viewBox="0 0 11 7"><path d="M.5.500L5.500 5.500 10.500.5" fill="none" stroke="#444" stroke-width="1.100"/></svg>
<div style="left:730px;top:456.0px;width:13px;height:13px;background:#fff;border:1px solid #969696;border-radius:1.500px"></div>
<span class="t dlg" style="left:745px;top:454.5px;height:16px;line-height:16px;">Не учитывать регистр</span>
<div style="left:730px;top:475.0px;width:13px;height:13px;background:#fff;border:1px solid #969696;border-radius:1.500px"></div>
<span class="t dlg" style="left:745px;top:473.5px;height:16px;line-height:16px;">Слова целиком</span>
<div style="left:730px;top:495.0px;width:13px;height:13px;background:#fff;border:1px solid #969696;border-radius:1.500px"></div>
<span class="t dlg" style="left:745px;top:493.5px;height:16px;line-height:16px;">Не содержит</span>
<div style="left:730px;top:514.0px;width:13px;height:13px;background:#fff;border:1px solid #969696;border-radius:1.500px"></div>
<span class="t dlg" style="left:745px;top:512.5px;height:16px;line-height:16px;">Search in binary files</span>
<div style="left:477px;top:543.5px;width:576px;height:70.5px;border:1px solid #dcdcdc"></div>
<div style="left:484px;top:541.5px;width:90.5px;height:5px;background:#f0f0f0"></div>
<span id="f128" class="t dlg b" style="left:488px;top:535.0px;height:16px;line-height:16px;letter-spacing:0.436px;">Result options</span>
<span class="t dlg" style="left:491px;top:552.5px;height:16px;line-height:16px;">List result in</span>
<div style="left:490px;top:570.5px;width:92px;height:20.0px;background:#e1e1e1;border:1px solid #adadad"></div>
<span class="t dlg" style="left:494px;top:572.0px;height:16px;line-height:16px;">RES1:</span>
<svg style="left:567px;top:577.5px" width="11" height="7" viewBox="0 0 11 7"><path d="M.5.500L5.500 5.500 10.500.5" fill="none" stroke="#444" stroke-width="1.100"/></svg>
<div style="left:490px;top:595.0px;width:13px;height:13px;background:#fff;border:1px solid #969696;border-radius:1.500px"></div>
<span class="t dlg" style="left:506px;top:593.5px;height:16px;line-height:16px;">Append results</span>
<div style="left:633px;top:553.5px;width:13px;height:13px;background:#fff;border:1px solid #969696;border-radius:1.500px"></div>
<span class="t dlg" style="left:648px;top:552.0px;height:16px;line-height:16px;">Stop search after found this many items</span>
<div style="left:653.5px;top:575.5px;width:45px;height:17px;background:#f6f6f6;border:1px solid #fafafa"></div>
<span class="t dlg" style="left:659px;top:574.0px;height:16px;line-height:16px;color:#8a8a8a;">1000</span>
<span class="t dlg" style="left:973px;top:594.5px;height:16px;line-height:16px;color:#1f1fc8;">Справка</span>
<div style="left:476.5px;top:626px;width:98.0px;height:19.5px;background:#fdfdfd;border:1px solid #d0d0d0;border-radius:4px;"></div>
<span class="t dlg" style="left:325.5px;width:400px;text-align:center;top:627.95px;height:16px;line-height:16px;">Другие &gt;&gt;</span>
<div style="left:950px;top:626px;width:101px;height:19.5px;background:#fdfdfd;border:1px solid #d0d0d0;border-radius:4px;"></div>
<span id="f129" class="t dlg" style="left:800.5px;width:400px;text-align:center;top:627.95px;height:16px;line-height:16px;letter-spacing:0.263px;">Закрыть / Скрыть</span>
<span id="f130" class="t dlg" style="left:654px;top:639.0px;height:16px;line-height:16px;letter-spacing:0.221px;">[Ctrl +] F1 - F12 = [Сохранить]/Загрузить</span>
</body></html>
